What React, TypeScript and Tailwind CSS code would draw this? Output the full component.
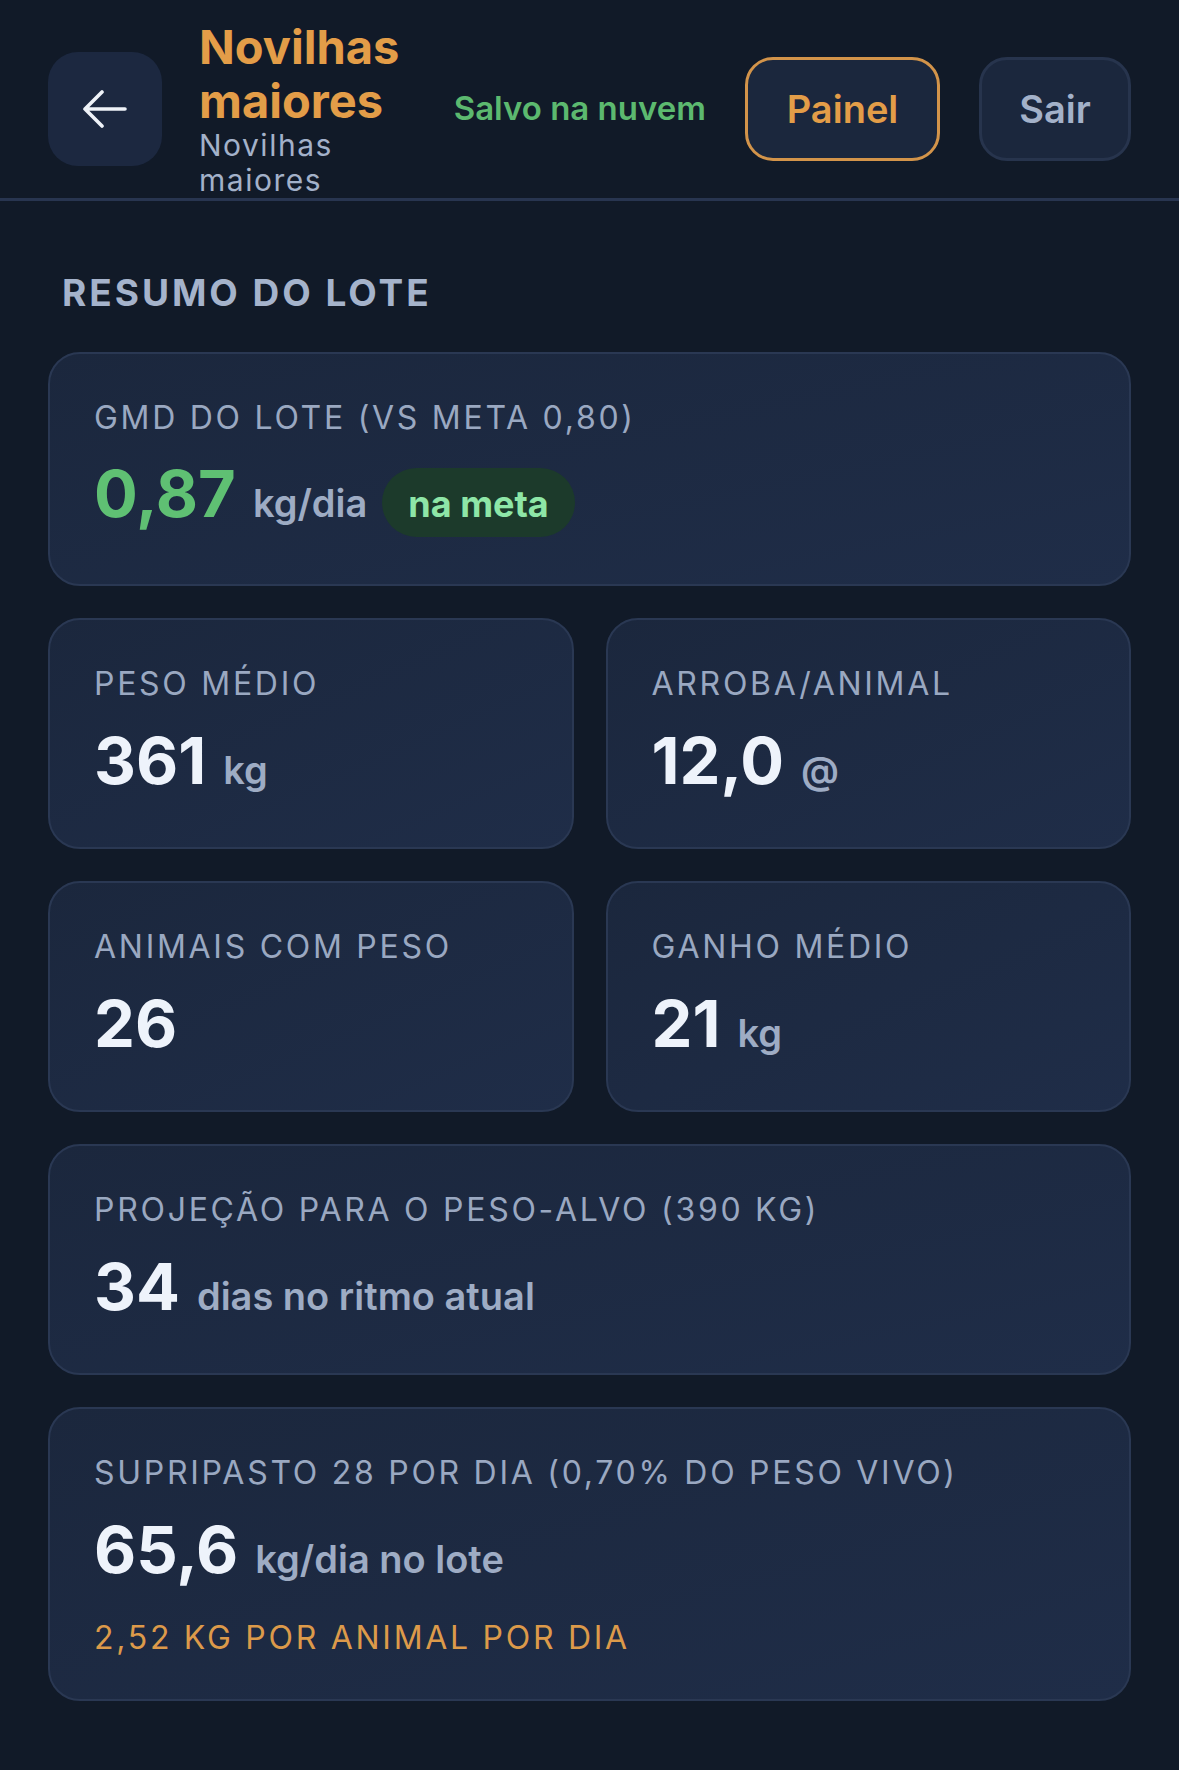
import React from 'react'

type StatProps = {
  label: string
  value: string
  unit?: string
  valueClass?: string
  footer?: React.ReactNode
  className?: string
}

const cardClass =
  'rounded-[32px] border-2 border-[#2a3853] bg-linear-to-br from-[#1b273d] to-[#1f2d48] px-[44px] pt-[46px]'

const labelClass =
  'text-[32px] leading-[36px] tracking-[0.085em] text-[#9aa8c1] whitespace-nowrap'

const StatCard: React.FC<StatProps> = ({
  label,
  value,
  unit = undefined,
  valueClass = 'text-[#eef3fb]',
  footer = undefined,
  className = 'pb-[48px]',
}) => {
  return (
    <div className={`${cardClass} ${className}`}>
      <div className={labelClass}>{label}</div>
      <div className="mt-[23px] flex items-baseline">
        <span className={`text-[65px] leading-[72px] font-bold ${valueClass}`}>
          {value}
        </span>
        {unit && (
          <span className="ml-[17px] text-[38px] font-semibold text-[#9eacc4]">
            {unit}
          </span>
        )}
      </div>
      {footer}
    </div>
  )
}

const BackArrow = () => (
  <svg width="46" height="38" viewBox="0 0 46 38" fill="none" aria-hidden="true">
    <path
      d="M43 19H3M20 2L3 19l17 17"
      stroke="#eef2f8"
      strokeWidth="3.6"
      strokeLinecap="round"
      strokeLinejoin="round"
    />
  </svg>
)

export default function App() {
  return (
    <div className="min-h-screen bg-[#111a28] font-[Inter,sans-serif] antialiased">
      {/* top bar */}
      <header className="flex items-center gap-[39px] border-b-[3px] border-[#283550] px-[48px] pt-[20px]">
        <button className="mr-[-2px] flex h-[114px] w-[114px] shrink-0 items-center justify-center rounded-[30px] bg-[#1c2840]">
          <BackArrow />
        </button>
        <div className="flex w-[214px] min-w-0 flex-1 flex-col">
          <h1 className="text-[47px] leading-[54px] font-bold text-[#e39d48]">
            Novilhas maiores
          </h1>
          <p className="text-[30px] leading-[35px] tracking-[0.05em] text-[#a3b1c9]">
            Novilhas maiores
          </p>
        </div>
        <span className="shrink-0 whitespace-nowrap text-[33px] font-semibold text-[#5cb96f]">
          Salvo na nuvem
        </span>
        <button className="flex h-[104px] w-[195px] shrink-0 items-center justify-center rounded-[28px] border-[3px] border-[#d3944a] bg-[#1b273d] text-[38px] font-semibold text-[#e39d48]">
          Painel
        </button>
        <button className="flex h-[104px] w-[152px] shrink-0 items-center justify-center rounded-[28px] border-[3px] border-[#27344d] bg-[#1b273d] text-[38px] font-semibold text-[#a3b1c9]">
          Sair
        </button>
      </header>

      <main className="px-[48px] pt-[70px] pb-[64px]">
        <h2 className="pl-[14px] text-[37px] leading-[44px] font-bold tracking-[0.08em] text-[#a5b3cb]">
          RESUMO DO LOTE
        </h2>

        <div className="mt-[37px] flex flex-col gap-[32px]">
          <div className={`${cardClass} pb-[47px]`}>
            <div className={labelClass}>GMD DO LOTE (VS META 0,80)</div>
            <div className="mt-[22px] flex items-baseline">
              <span className="text-[65px] leading-[72px] font-bold text-[#5fc073]">
                0,87
              </span>
              <span className="ml-[17px] text-[38px] font-semibold text-[#9eacc4]">
                kg/dia
              </span>
              <span className="ml-[15px] rounded-full bg-[#1c3a2b] px-[26px] pt-[16px] pb-[13px] text-[36px] leading-[40px] font-bold text-[#8ee6a7]">
                na meta
              </span>
            </div>
          </div>

          <div className="grid grid-cols-2 gap-[32px]">
            <StatCard label="PESO MÉDIO" value="361" unit="kg" />
            <StatCard label="ARROBA/ANIMAL" value="12,0" unit="@" />
            <StatCard label="ANIMAIS COM PESO" value="26" />
            <StatCard label="GANHO MÉDIO" value="21" unit="kg" />
          </div>

          <StatCard
            label="PROJEÇÃO PARA O PESO-ALVO (390 KG)"
            value="34"
            unit="dias no ritmo atual"
          />

          <StatCard
            label="SUPRIPASTO 28 POR DIA (0,70% DO PESO VIVO)"
            value="65,6"
            unit="kg/dia no lote"
            className="pb-[43px]"
            footer={
              <div className="mt-[32px] text-[32px] leading-[36px] tracking-[0.085em] text-[#dc9a4a]">
                2,52 KG POR ANIMAL POR DIA
              </div>
            }
          />
        </div>
      </main>
    </div>
  )
}
